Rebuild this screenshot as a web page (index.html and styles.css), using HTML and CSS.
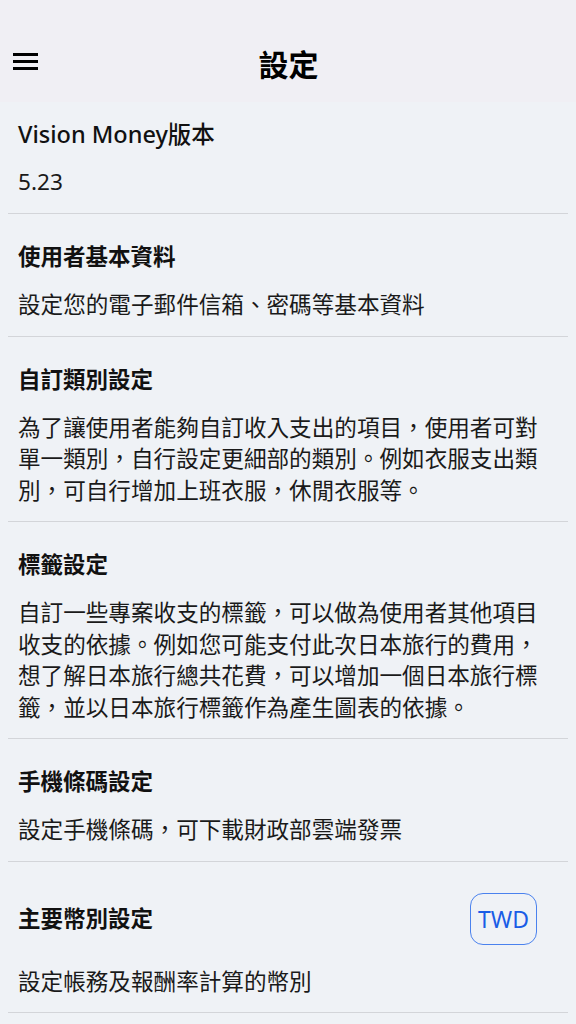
FILE: index.html
```html
<!DOCTYPE html>
<html lang="zh-TW">
<head>
<meta charset="utf-8">
<title>設定</title>
<link rel="stylesheet" href="styles.css">
</head>
<body>
<header class="topbar">
  <button class="menu-btn" aria-label="menu">
    <svg width="26" height="20" viewBox="0 0 26 20"><rect x="0" y="2" width="25" height="3" fill="#000"/><rect x="0" y="9" width="25" height="3" fill="#000"/><rect x="0" y="16" width="25" height="3" fill="#000"/></svg>
  </button>
  <h1 class="page-title">設定</h1>
  <span class="spacer"></span>
</header>
<main class="list">
  <section class="item item-first">
    <div class="item-title">Vision Money版本</div>
    <div class="item-desc">5.23</div>
  </section>
  <section class="item">
    <div class="item-title">使用者基本資料</div>
    <div class="item-desc">設定您的電子郵件信箱、密碼等基本資料</div>
  </section>
  <section class="item">
    <div class="item-title">自訂類別設定</div>
    <div class="item-desc">為了讓使用者能夠自訂收入支出的項目，使用者可對單一類別，自行設定更細部的類別。例如衣服支出類別，可自行增加上班衣服，休閒衣服等。</div>
  </section>
  <section class="item">
    <div class="item-title">標籤設定</div>
    <div class="item-desc">自訂一些專案收支的標籤，可以做為使用者其他項目收支的依據。例如您可能支付此次日本旅行的費用，想了解日本旅行總共花費，可以增加一個日本旅行標籤，並以日本旅行標籤作為產生圖表的依據。</div>
  </section>
  <section class="item">
    <div class="item-title">手機條碼設定</div>
    <div class="item-desc">設定手機條碼，可下載財政部雲端發票</div>
  </section>
  <section class="item item-currency">
    <div class="item-row">
      <div class="item-title">主要幣別設定</div>
      <button class="currency-btn">TWD</button>
    </div>
    <div class="item-desc">設定帳務及報酬率計算的幣別</div>
  </section>
</main>
</body>
</html>
```

FILE: styles.css
```css
* { box-sizing: border-box; }
html, body { margin: 0; padding: 0; }
body {
  background: #eff2f6;
  font-family: "Noto Sans", "Noto Sans CJK TC", sans-serif;
  color: #111;
  width: 576px;
  min-height: 1024px;
}
.topbar {
  height: 102px;
  background: #f0eff4;
  display: flex;
  align-items: flex-end;
  padding: 0 12px 19px 13px;
}
.menu-btn {
  border: 0;
  background: none;
  padding: 0;
  width: 26px;
  height: 20px;
  display: flex;
  margin-bottom: 12px;
}
.page-title {
  flex: 1;
  margin: 0;
  text-align: center;
  font-size: 30px;
  font-weight: 700;
  line-height: 40px;
  color: #000;
  font-family: "Noto Sans CJK TC", sans-serif;
}
.spacer { width: 26px; }
.list { padding: 0 8px; }
.item {
  padding: 27px 10px 16px 10px;
  border-bottom: 1px solid #d3d5d9;
}
.item-first { padding-top: 16px; }
.item-title {
  font-size: 22.5px;
  font-weight: 700;
  line-height: 32px;
  color: #111;
  margin-bottom: 15px;
}
.item-first .item-title { font-weight: 500; font-size: 23.5px; margin-bottom: 15.5px; }
.item-desc {
  font-family: "Noto Sans CJK TC", "Noto Sans", sans-serif;
  font-size: 22.6px;
  line-height: 31.5px;
  color: #1a1a1a;
}
.item-first .item-desc { font-family: "Noto Sans", "Noto Sans CJK TC", sans-serif; }
.item-currency { padding-top: 31px; }
.item-row {
  display: flex;
  align-items: center;
  justify-content: space-between;
  margin-bottom: 20px;
}
.item-row .item-title { margin-bottom: 0; }
.currency-btn {
  width: 67px;
  height: 52px;
  border: 1.5px solid #4a82ee;
  border-radius: 13px;
  background: transparent;
  color: #1a5de6;
  font-family: "Noto Sans", sans-serif;
  font-size: 23px;
  padding: 0;
  margin-right: 21px;
}
```
